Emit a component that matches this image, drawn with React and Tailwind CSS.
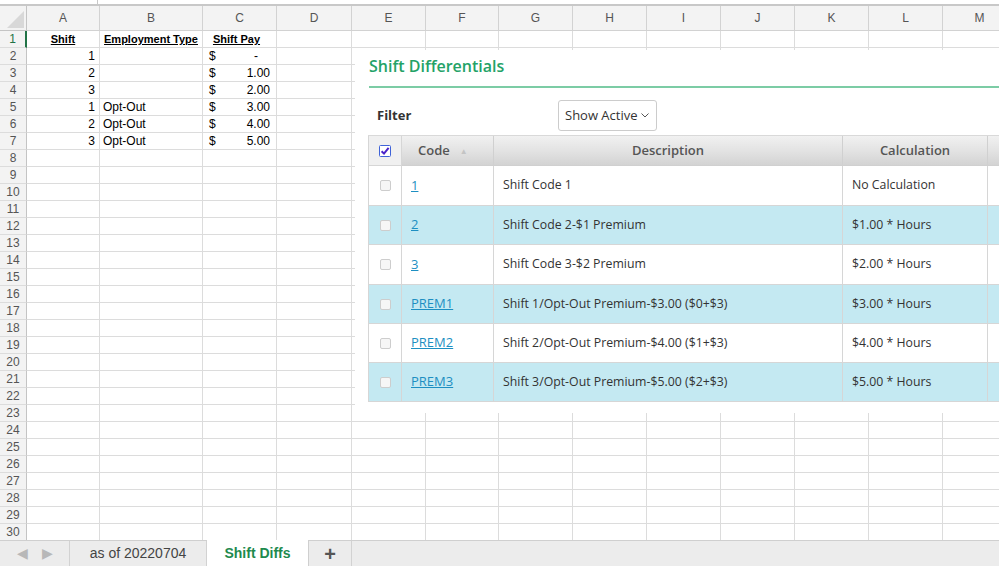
import React from 'react';

const COLS = ['A', 'B', 'C', 'D', 'E', 'F', 'G', 'H', 'I', 'J', 'K', 'L', 'M', 'N'];
const GRID = 'grid grid-cols-[27px_73px_103px_74px_75px_74px_73px_74px_74px_74px_74px_74px_74px_74px_74px]';

// spreadsheet data (rows 1-7)
const sheet = {
  1: { a: 'Shift', b: 'Employment Type', c: 'Shift Pay', head: true },
  2: { a: '1', pay: '-' },
  3: { a: '2', pay: '1.00' },
  4: { a: '3', pay: '2.00' },
  5: { a: '1', b: 'Opt-Out', pay: '3.00' },
  6: { a: '2', b: 'Opt-Out', pay: '4.00' },
  7: { a: '3', b: 'Opt-Out', pay: '5.00' },
};

const shifts = [
  { code: '1', desc: 'Shift Code 1', calc: 'No Calculation', h: 'h-[40px]' },
  { code: '2', desc: 'Shift Code 2-$1 Premium', calc: '$1.00 * Hours', h: 'h-[39px]' },
  { code: '3', desc: 'Shift Code 3-$2 Premium', calc: '$2.00 * Hours', h: 'h-[40px]' },
  { code: 'PREM1', desc: 'Shift 1/Opt-Out Premium-$3.00 ($0+$3)', calc: '$3.00 * Hours', h: 'h-[39px]' },
  { code: 'PREM2', desc: 'Shift 2/Opt-Out Premium-$4.00 ($1+$3)', calc: '$4.00 * Hours', h: 'h-[39px]' },
  { code: 'PREM3', desc: 'Shift 3/Opt-Out Premium-$5.00 ($2+$3)', calc: '$5.00 * Hours', h: 'h-[39px]' },
];

const cell = 'border-r border-b border-[#dcdcdc] h-[17px] leading-[16px] text-black overflow-hidden whitespace-nowrap';
const headCell = 'text-center font-bold underline text-[11px]';
const bodyCell = 'text-[12px]';

const SheetRow = ({ n }) => {
  const d = sheet[n] || {};
  const rowHead = n === 1
    ? 'text-[#217346] border-r-2 border-r-[#217346]'
    : 'text-[#555] border-r border-r-[#c4c4c4]';
  const t = d.head ? headCell : bodyCell;
  return (
    <div className={GRID}>
      <div className={`h-[17px] bg-[#f3f3f3] border-b border-[#dcdcdc] text-[12px] leading-[16px] text-center ${rowHead}`}>
        {n}
      </div>
      <div className={`${cell} ${t} ${d.head ? '' : 'text-right pr-[4px]'}`}>{d.a}</div>
      <div className={`${cell} ${t} ${d.head ? '' : 'pl-[3px]'}`}>{d.b}</div>
      <div className={`${cell} ${t} ${d.head ? '' : 'flex justify-between pl-[6px]'} ${d.pay === '-' ? 'pr-[18px]' : 'pr-[6px]'}`}>
        {d.head ? d.c : d.pay ? (<><span>$</span><span>{d.pay}</span></>) : null}
      </div>
      {COLS.slice(3).map((c) => (
        <div key={c} className={cell} />
      ))}
    </div>
  );
};

const HeaderCheck = () => (
  <svg width="12" height="12" viewBox="0 0 12 12">
    <rect x="0.5" y="0.5" width="11" height="11" rx="1" fill="#fff" stroke="#3f63d8" />
    <path d="M2.6 6.2 L5 8.6 L9.6 2.8" fill="none" stroke="#4a22c9" strokeWidth="2" />
  </svg>
);

const hdr = 'bg-linear-to-b from-[#f1f1f1] via-[#e3e3e3] to-[#d3d3d3] border-b border-[#d0d0d0]';

const Panel = () => (
  <div className="absolute left-[355px] top-[50px] w-[644px] h-[363px] bg-white overflow-hidden font-['Open_Sans',sans-serif]">
    <div className="pl-[14px] mt-[5px] text-[16px] leading-[22px] font-semibold text-[#23a267]">Shift Differentials</div>
    <div className="ml-[14px] mt-[9px] h-[2px] bg-[#7ccca5]" />

    <div className="flex items-center mt-[12px] pl-[22px]">
      <div className="w-[181px] text-[13px] font-bold text-[#333]">Filter</div>
      <div className="w-[99px] h-[31px] border border-[#cccccc] rounded-[3px] flex items-center justify-between pl-[6px] pr-[7px] text-[13px] text-[#333]">
        <span>Show Active</span>
        <svg width="8" height="5" viewBox="0 0 8 5"><path d="M0.5 0.5 L4 4 L7.5 0.5" fill="none" stroke="#555" strokeWidth="1" /></svg>
      </div>
    </div>

    <div className="mt-[4px] ml-[13px] text-[12.3px]">
      {/* header */}
      <div className="grid grid-cols-[34px_92px_349px_145px_1fr] h-[31px] border-t border-[#d9d9d9] text-[13px]">
        <div className="bg-[#f0f0f0] border-l border-r border-b border-[#d6d6d6] flex items-center justify-center">
          <HeaderCheck />
        </div>
        <div className={`${hdr} border-r flex items-center pl-[16px] font-semibold text-[#555]`}>
          Code <span className="ml-[10px] text-[8px] text-[#c4c4c4]">▲</span>
        </div>
        <div className={`${hdr} border-r flex items-center justify-center font-semibold text-[#555]`}>
          Description
        </div>
        <div className={`${hdr} border-r flex items-center justify-center font-semibold text-[#555]`}>
          Calculation
        </div>
        <div className={hdr} />
      </div>
      {/* rows */}
      {shifts.map((s, i) => (
        <div
          key={s.code}
          className={`grid grid-cols-[34px_92px_349px_145px_1fr] ${s.h} border-b border-[#d6d6d6] ${i % 2 ? 'bg-[#c4e9f2]' : 'bg-white'} text-[#333]`}
        >
          <div className="border-l border-r border-[#d6d6d6] flex items-center justify-center">
            <div className="w-[11px] h-[11px] rounded-[2px] border border-[#cdcdcd] bg-[#f6f6f6]" />
          </div>
          <div className="border-r border-[#d6d6d6] flex items-center pl-[9px] text-[13px]">
            <a href="#" className="text-[#1d8fc2] underline">{s.code}</a>
          </div>
          <div className="border-r border-[#d6d6d6] flex items-center pl-[9px] whitespace-nowrap">{s.desc}</div>
          <div className="border-r border-[#d6d6d6] flex items-center pl-[9px] whitespace-nowrap">{s.calc}</div>
          <div />
        </div>
      ))}
    </div>
  </div>
);

const TabBar = () => (
  <div className="h-[26px] bg-[#ececec] border-t border-[#cfcfcf] flex font-['Liberation_Sans',Arial,sans-serif] text-[14px]">
    <div className="w-[70px] flex items-center justify-center gap-[14px] text-[#b8b8b8] text-[14px] border-r border-[#d2d2d2]">
      <span>◀</span>
      <span>▶</span>
    </div>
    <div className="w-[137px] flex items-center justify-center text-[#444] border-r border-[#d2d2d2]">as of 20220704</div>
    <div className="w-[102px] -mt-px bg-white flex items-center justify-center font-bold text-[#1e8a4e] border-r border-[#cfcfcf]">Shift Diffs</div>
    <div className="w-[43px] flex items-center justify-center text-[#555] text-[20px] font-bold border-r border-[#d2d2d2]">+</div>
  </div>
);

export default function App() {
  const rows = Array.from({ length: 30 }, (_, i) => i + 1);
  return (
    <div className="w-[999px] h-[566px] relative overflow-hidden bg-white font-['Liberation_Sans',Arial,sans-serif]">
      <div className="h-[540px] overflow-hidden">
        {/* formula bar edge */}
        <div className="h-[6px] border-b-2 border-[#c8c8c8]">
          <div className="w-[98px] h-full border-r border-[#c8c8c8]" />
        </div>
        {/* column headers */}
        <div className={`${GRID} h-[25px] bg-[#f3f3f3]`}>
          <div className="border-r border-b border-[#c4c4c4] flex items-end justify-end p-[2px]">
            <svg width="17" height="17" viewBox="0 0 17 17"><polygon points="17,0 17,17 0,17" fill="#d8d8d8" /></svg>
          </div>
          {COLS.map((c) => (
            <div key={c} className="border-r border-b border-[#d2d2d2] flex items-center justify-center text-[12px] text-[#555]">
              {c}
            </div>
          ))}
        </div>
        {rows.map((n) => (
          <SheetRow key={n} n={n} />
        ))}
      </div>
      <TabBar />
      <Panel />
    </div>
  );
}
